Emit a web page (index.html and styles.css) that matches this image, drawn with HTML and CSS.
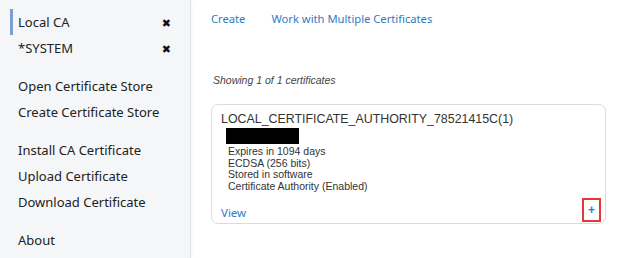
FILE: index.html
```html
<!DOCTYPE html>
<html lang="en">
<head>
    <meta charset="UTF-8">
    <title>Certificates</title>
    <link rel="stylesheet" href="styles.css">
</head>
<body>
    <div class="layout">
        <nav class="sidebar">
            <ul class="nav-group">
                <li class="nav-item active"><span>Local CA</span><span class="close">&#10006;</span></li>
                <li class="nav-item"><span>*SYSTEM</span><span class="close">&#10006;</span></li>
            </ul>
            <ul class="nav-group">
                <li class="nav-item">Open Certificate Store</li>
                <li class="nav-item">Create Certificate Store</li>
            </ul>
            <ul class="nav-group">
                <li class="nav-item">Install CA Certificate</li>
                <li class="nav-item">Upload Certificate</li>
                <li class="nav-item">Download Certificate</li>
            </ul>
            <ul class="nav-group">
                <li class="nav-item">About</li>
            </ul>
        </nav>

        <main class="content">
            <div class="toolbar">
                <a class="link">Create</a>
                <a class="link">Work with Multiple Certificates</a>
            </div>

            <p class="count">Showing 1 of 1 certificates</p>

            <div class="card">
                <div class="card-title">LOCAL_CERTIFICATE_AUTHORITY_78521415C(1)</div>
                <div class="redacted"></div>
                <ul class="details">
                    <li>Expires in 1094 days</li>
                    <li>ECDSA (256 bits)</li>
                    <li>Stored in software</li>
                    <li>Certificate Authority (Enabled)</li>
                </ul>
                <div class="card-footer">
                    <a class="link">View</a>
                    <span class="expand">+</span>
                </div>
            </div>
        </main>
    </div>
</body>
</html>
```

FILE: styles.css
```css
html, body {
    margin: 0;
    padding: 0;
    height: 100%;
}

body {
    font-family: "Noto Sans", "DejaVu Sans", sans-serif;
    color: #222;
    background: white;
}

.layout {
    display: flex;
    height: 258px;
}

.sidebar {
    width: 190px;
    flex-shrink: 0;
    background: #f5f6f8;
    border-right: 1px solid #e3e4e6;
    box-shadow: 1px 0 2px rgba(0, 0, 0, 0.04);
    padding-top: 9px;
}

.nav-group {
    list-style: none;
    margin: 0 0 12px;
    padding: 0;
}

.nav-item {
    display: flex;
    justify-content: space-between;
    align-items: center;
    height: 26px;
    padding: 0 19px 0 18px;
    font-size: 13px;
    color: #222;
    position: relative;
}

.nav-item.active::before {
    content: "";
    position: absolute;
    left: 10px;
    top: 0;
    width: 3px;
    height: 26px;
    background: #7b9fd4;
}

.close {
    font-size: 11px;
    color: #111;
}

.content {
    flex: 1;
    padding: 11px 0 0 20px;
}

.toolbar {
    display: flex;
    gap: 26px;
    font-size: 11.2px;
    line-height: 16px;
}

.link {
    color: #2d7bc4;
    text-decoration: none;
    cursor: pointer;
}

.count {
    font-family: "Liberation Sans", Arial, sans-serif;
    font-style: italic;
    font-size: 10.5px;
    color: #444;
    margin: 47px 0 18px 2px;
}

.card {
    width: 395px;
    box-sizing: border-box;
    border: 1px solid #dcdcdc;
    border-radius: 7px;
    padding: 7px 4px 1px 9px;
    font-family: "Liberation Sans", Arial, sans-serif;
}

.card-title {
    font-size: 12.4px;
    color: #333;
    line-height: 15px;
}

.redacted {
    width: 73px;
    height: 16px;
    background: #000;
    margin: 1px 0 0 5px;
}

.details {
    list-style: none;
    margin: 2px 0 0 7px;
    padding: 0;
    font-size: 10.5px;
    line-height: 11.5px;
    color: #333;
}

.card-footer {
    display: flex;
    justify-content: space-between;
    align-items: center;
    margin-top: 6px;
    font-size: 11.5px;
}

.card-footer .link {
    font-family: "Noto Sans", "DejaVu Sans", sans-serif;
    padding-top: 4px;
}

.expand {
    width: 15px;
    height: 20px;
    border: 2px solid #e53935;
    color: #2d7bc4;
    font-size: 12px;
    font-weight: bold;
    display: flex;
    align-items: center;
    justify-content: center;
}
```
